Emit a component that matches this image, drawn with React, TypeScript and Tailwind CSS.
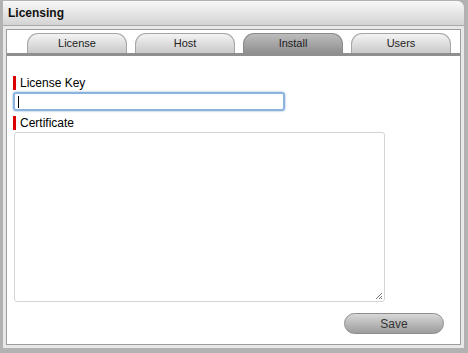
const tabs = [
  { label: 'License', active: false },
  { label: 'Host', active: false },
  { label: 'Install', active: true },
  { label: 'Users', active: false },
]

const FieldLabel = ({ text }: { text: string }) => (
  <div className="flex items-center h-[14px]">
    <span className="w-[3px] h-[14px] bg-[#dd0000]" />
    <span className="ml-[4px] text-[12px] leading-none text-black">{text}</span>
  </div>
)

export default function App() {
  return (
    <div
      className="w-[468px] h-[353px] bg-[#b2b2b2] pl-[3px] pr-[4px] pt-[1px] pb-[5px]"
      style={{ fontFamily: '"Liberation Sans", Arial, sans-serif' }}
    >
      <div className="h-full flex flex-col bg-[#e8e8e8] rounded-tr-[7px]">
        {/* title bar */}
        <div className="h-[25px] flex items-center px-[5px] rounded-tr-[7px] border-b border-[#a8a8a8] bg-gradient-to-b from-[#f8f8f8] to-[#d4d4d4]">
          <span className="text-[12px] font-bold text-[#111]">Licensing</span>
        </div>

        <div className="flex-1 px-[3px] pt-[3px] pb-[3px]">
          <div className="h-full flex flex-col bg-white border border-[#9c9c9c]">
            {/* tabs */}
            <div className="flex gap-[8px] pl-[20px] pt-[3px]">
              {tabs.map((t) => (
                <div
                  key={t.label}
                  className={`w-[100px] h-[20px] flex items-center justify-center rounded-t-[11px] border border-b-0 text-[11px] ${
                    t.active
                      ? 'border-[#8a8a8a] bg-gradient-to-b from-[#bdbdbd] to-[#8f8f8f] text-[#222]'
                      : 'border-[#a6a6a6] bg-gradient-to-b from-[#f4f4f4] to-[#c9c9c9] text-[#222]'
                  }`}
                >
                  {t.label}
                </div>
              ))}
            </div>
            <div className="h-[3px] bg-[#8f8f8f]" />

            {/* form */}
            <div className="flex-1 flex flex-col pl-[6px] pt-[20px]">
              <FieldLabel text="License Key" />
              <div className="mt-[2px] w-[272px] h-[19px] rounded-[3px] border-2 border-[#8bb3dd] shadow-[0_0_2px_#6c9fd6] flex items-center px-[3px]">
                <span className="w-px h-[12px] bg-black" />
              </div>
              <div className="mt-[5px]">
                <FieldLabel text="Certificate" />
              </div>
              <div className="relative mt-[2px] ml-[1px] w-[371px] h-[170px] rounded-[3px] border border-[#d4d4d4]">
                <svg className="absolute right-[1px] bottom-[1px]" width="8" height="8" viewBox="0 0 8 8">
                  <path d="M7 1 L1 7 M7 4 L4 7 M7 6 L6 7" stroke="#777" strokeWidth="1" />
                </svg>
              </div>
              <div className="flex justify-end pr-[16px] mt-[11px]">
                <button className="w-[100px] h-[21px] rounded-full border border-[#8c8c8c] bg-gradient-to-b from-[#d8d8d8] to-[#9c9c9c] text-[12px] text-[#333]">
                  Save
                </button>
              </div>
            </div>
          </div>
        </div>
      </div>
    </div>
  )
}
